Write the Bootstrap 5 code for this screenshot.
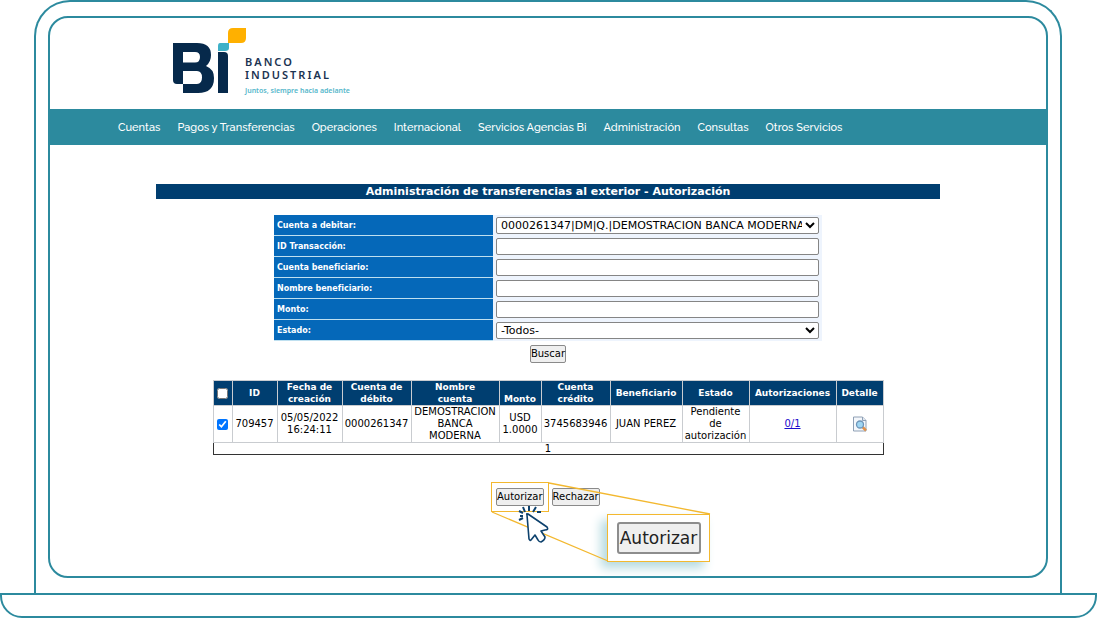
<!DOCTYPE html>
<html lang="es">
<head>
<meta charset="utf-8">
<meta name="viewport" content="width=device-width, initial-scale=1">
<title>Banco Industrial - Transferencias al exterior</title>
<link href="https://cdn.jsdelivr.net/npm/bootstrap@5.3.0/dist/css/bootstrap.min.css" rel="stylesheet">
<style>
  :root { --teal: #2c8a9e; --navy: #003e70; --blue: #0568b9; --gold: #f3b82f; }
  body { background: #fff; color: #000; font-family: "DejaVu Sans", Verdana, sans-serif; font-size: 10px; line-height: 12px; }
  .lid { margin: 0 35px 0 34px; padding: 14px 12px 15px; border: 2px solid var(--teal); border-bottom: 0; border-radius: 36px 36px 0 0; }
  .screen { border: 2px solid var(--teal); border-radius: 20px; }
  .laptop-base { height: 25px; border: 2px solid var(--teal); border-radius: 0 0 22px 22px; }
  .brand-row { height: 91px; padding: 9px 0 0 122px; }
  .brand-name { font-family: "Noto Sans", sans-serif; font-weight: 600; font-size: 11px; line-height: 13px; letter-spacing: 2px; color: #1b3352; padding-top: 28px; }
  .tagline { font-family: "Noto Sans", sans-serif; font-weight: 600; font-size: 7px; line-height: 10px; color: #56b7cb; padding-top: 5px; }
  .menu { background: var(--teal); height: 36px; padding: 1px 68px 0; }
  .menu .nav-link { padding: 0; color: #fff; font-family: Raleway, "Open Sans", sans-serif; font-weight: 500; font-size: 11px; line-height: 36px; white-space: nowrap; }
  .menu .nav { gap: 17px; }
  .content { width: 80%; max-width: 784px; padding-top: 39px; }
  .title { background: var(--navy); color: #fff; font-size: 11px; line-height: 15px; font-weight: 700; margin: 0 0 16px; }
  .filters { width: 100%; max-width: 548px; }
  .filters .line { background: #eef4fd; }
  .filters label { width: 219px; flex-shrink: 0; padding: 1px 0 0 3px; background: var(--blue); box-shadow: inset 0 -1px #bfe0f0; color: #fff; font-size: 8px; font-weight: 700; line-height: 20px; }
  .filters .field { min-width: 0; padding: 2px 3px; }
  .filters input, .filters select { height: 17px; padding: 0 3px; border: 1px solid #858585; border-radius: 2px; background: #fff; color: #000; font-size: 11px; line-height: 15px; }
  .filters select { appearance: auto; padding: 0; }
  .action { padding: 0; height: 18px; border: 1px solid #8a8a8a; border-radius: 2px; background: #efefef; color: #000; font-size: 10px; line-height: 14px; }
  .grid-table { width: 100%; max-width: 670px; margin: 17px auto 0; table-layout: fixed; border-collapse: collapse; text-align: center; }
  .grid-table th { background: var(--navy); color: #fff; font-size: 9px; border: 1px solid #c9ccd0; height: 25px; padding: 0; vertical-align: middle; }
  .grid-table td { border: 1px solid #c9ccd0; height: 36px; padding: 0; vertical-align: middle; }
  .grid-table tfoot td { height: 12px; line-height: 11px; border: 1px solid #333; border-top-color: #c9ccd0; }
  .grid-table input { width: 11px; height: 11px; display: block; margin: 0 auto; }
  .grid-table a { color: #1a0dcc; }
  .highlight { padding: 5px 4px; border: 1px solid var(--gold); }
  .callout-art { left: -1px; top: -1px; pointer-events: none; z-index: 1; }
  .zoomed { left: 115px; top: 31px; width: 103px; height: 48px; border: 1px solid var(--gold); background: #fff; box-shadow: -6px 6px 10px #b5dae0; }
  .zoomed button { width: 84px; height: 32px; padding: 0; border: 2px solid #8d8d8d; border-radius: 3px; background: #efefef; color: #222; font-size: 17px; line-height: 28px; }
  .actions { margin: 27px 0 0 335px; }
  .actions .second { margin: 6px 0 0 3px; }
</style>
</head>
<body>
<div class="d-flex flex-column min-vh-100">
  <div class="lid flex-grow-1 d-flex flex-column">
    <div class="screen flex-grow-1">
      <header class="brand-row d-flex">
        <svg width="73" height="70" viewBox="0 0 73 70" overflow="visible" aria-label="Bi">
          <path fill="#06294b" fill-rule="evenodd" d="M1 16H25Q39 16 39 28Q39 35 34 39Q42 42 42 51Q42 66 26 66H11V57H5Q1 57 1 53ZM11 25V35.500H23Q28 35.500 28 30Q28 25 23 25ZM11 44V57H25Q30 57 30 50.500Q30 44 25 44Z"/>
          <path fill="#06294b" d="M46 25H52Q56 25 56 29V66H46Z"/>
          <path fill="#3fb1c8" d="M48 16H57V21Q57 24 53 24H46V19Q46 16 48 16Z"/>
          <path fill="#ffb000" d="M61 1H74V11Q74 16 69 16H56V6Q56 1 61 1Z"/>
        </svg>
        <div><div class="brand-name">BANCO<br>INDUSTRIAL</div><div class="tagline">Juntos, siempre hacia adelante</div></div>
      </header>
      <nav class="menu">
        <div class="nav flex-nowrap">
          <a class="nav-link" href="#">Cuentas</a>
          <a class="nav-link" href="#">Pagos y Transferencias</a>
          <a class="nav-link" href="#">Operaciones</a>
          <a class="nav-link" href="#">Internacional</a>
          <a class="nav-link" href="#">Servicios Agencias Bi</a>
          <a class="nav-link" href="#">Administración</a>
          <a class="nav-link" href="#">Consultas</a>
          <a class="nav-link" href="#">Otros Servicios</a>
        </div>
      </nav>
      <main class="content mx-auto">
        <h1 class="title text-center">Administración de transferencias al exterior - Autorización</h1>
        <form class="filters mx-auto">
          <div class="line d-flex"><label for="cuenta">Cuenta a debitar:</label><div class="field flex-grow-1 d-flex"><select id="cuenta" class="w-100"><option>0000261347|DM|Q.|DEMOSTRACION BANCA MODERNA</option></select></div></div>
          <div class="line d-flex"><label for="transaccion">ID Transacción:</label><div class="field flex-grow-1 d-flex"><input id="transaccion" type="text" class="w-100"></div></div>
          <div class="line d-flex"><label for="beneficiario">Cuenta beneficiario:</label><div class="field flex-grow-1 d-flex"><input id="beneficiario" type="text" class="w-100"></div></div>
          <div class="line d-flex"><label for="nombre">Nombre beneficiario:</label><div class="field flex-grow-1 d-flex"><input id="nombre" type="text" class="w-100"></div></div>
          <div class="line d-flex"><label for="monto">Monto:</label><div class="field flex-grow-1 d-flex"><input id="monto" type="text" class="w-100"></div></div>
          <div class="line d-flex"><label for="estado">Estado:</label><div class="field flex-grow-1 d-flex"><select id="estado" class="w-100"><option>-Todos-</option></select></div></div>
          <div class="d-flex justify-content-center pt-1"><button type="button" class="action">Buscar</button></div>
        </form>
        <table class="grid-table">
          <colgroup><col style="width:19px"><col style="width:45px"><col style="width:65px"><col style="width:69px"><col style="width:88px"><col style="width:42px"><col style="width:69px"><col style="width:72px"><col style="width:67px"><col style="width:87px"><col style="width:47px"></colgroup>
          <thead><tr>
            <th><input type="checkbox" aria-label="Seleccionar todas"></th><th>ID</th><th>Fecha de creación</th><th>Cuenta de débito</th><th>Nombre<br>cuenta</th><th class="align-bottom">Monto</th><th>Cuenta<br>crédito</th><th>Beneficiario</th><th>Estado</th><th>Autorizaciones</th><th>Detalle</th>
          </tr></thead>
          <tbody><tr>
            <td><input type="checkbox" checked aria-label="Seleccionar 709457"></td><td>709457</td><td>05/05/2022 16:24:11</td><td>0000261347</td><td>DEMOSTRACION BANCA MODERNA</td><td>USD 1.0000</td><td>3745683946</td><td>JUAN PEREZ</td><td>Pendiente<br>de<br>autorización</td><td><a href="#">0/1</a></td>
            <td><a href="#" aria-label="Ver detalle"><svg width="16" height="16" viewBox="0 0 16 16"><path d="M1.500 1h9L14 4.500V15H1.500Z" fill="#f4f7fb" stroke="#8fa0b5"/><path d="M10.500 1v3.500H14" fill="#dfe7f1" stroke="#8fa0b5"/><path d="M10.500 11L14 14.500" stroke="#e0924c" stroke-width="2.500"/><circle cx="8" cy="8.500" r="3.500" fill="#9fd6f3" stroke="#6d94b8" stroke-width="1.300"/></svg></a></td>
          </tr></tbody>
          <tfoot><tr><td colspan="11">1</td></tr></tfoot>
        </table>
        <div class="actions d-flex align-items-start">
          <div class="highlight d-flex position-relative">
            <button type="button" class="action">Autorizar</button>
            <div class="zoomed position-absolute d-flex align-items-center justify-content-center"><button type="button">Autorizar</button></div>
            <svg class="callout-art position-absolute" width="220" height="82" viewBox="0 0 220 82">
              <path d="M58 1L219 32M1 30L117 79" fill="none" stroke="#f3b82f" stroke-width="1.300"/>
              <path d="M36 33Q35 31 37 32L56 45Q58 48 54 48L50 49L54 55Q54 58 50 60Q48 60 47 58L44 53L40 58Q39 59 38 57Z" fill="#fff" stroke="#0d416d" stroke-width="1.600" stroke-linejoin="round"/>
              <path d="M32 25L34 30M38 24V29M45 25L42 30M50 30H46M28 29L32 31M28 38L32 36M29 34H32" stroke="#0d416d" stroke-width="2"/>
            </svg>
          </div>
          <button type="button" class="action second">Rechazar</button>
        </div>
      </main>
    </div>
  </div>
  <div class="laptop-base"></div>
</div>
<script src="https://cdn.jsdelivr.net/npm/bootstrap@5.3.0/dist/js/bootstrap.bundle.min.js"></script>
</body>
</html>
